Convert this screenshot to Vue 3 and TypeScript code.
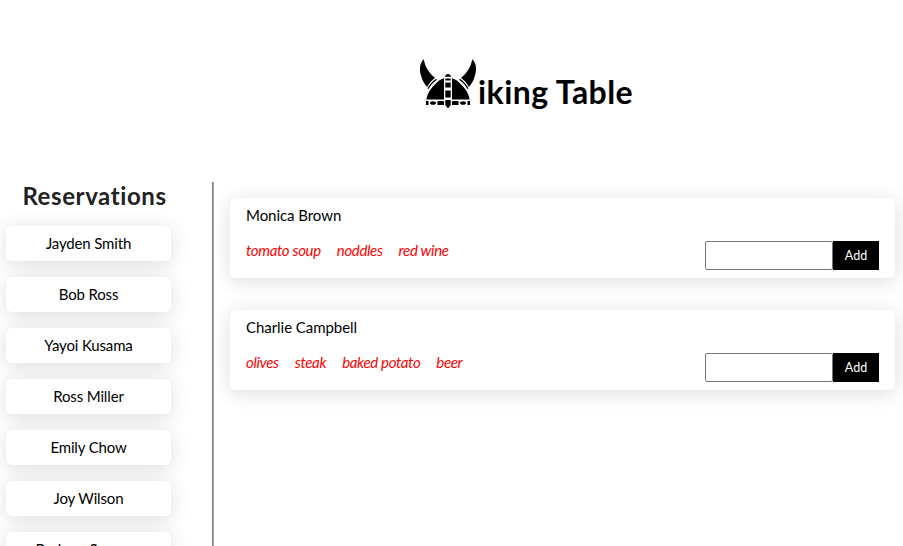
<script setup lang="ts">
interface Guest {
  name: string
  orders: string[]
}

const reservations: string[] = [
  'Jayden Smith',
  'Bob Ross',
  'Yayoi Kusama',
  'Ross Miller',
  'Emily Chow',
  'Joy Wilson',
  'Barbara Spencer',
]

const guests: Guest[] = [
  { name: 'Monica Brown', orders: ['tomato soup', 'noddles', 'red wine'] },
  { name: 'Charlie Campbell', orders: ['olives', 'steak', 'baked potato', 'beer'] },
]
</script>

<template>
  <div class="page">
    <header class="header">
      <svg class="logo" viewBox="0 0 58 50" aria-hidden="true">
        <path d="M4.800 .3C.5 4 0 11 2.300 17.500 3.500 21.500 5.500 25 8 28Q11 22.500 16 18.800C10 14 6 8 4.800 .3Z" />
        <path d="M53.200 .3c4.300 3.700 4.800 10.700 2.500 17.200-1.200 4-3.200 7.500-5.700 10.500Q47 22.500 42 18.800C48 14 52 8 53.200 .3Z" />
        <path class="band" d="M9 29.800Q12 23.800 17.500 20.200M49 29.800Q46 23.800 40.500 20.200" />
        <path d="M7.300 40.500C8.500 34 11.500 30 15 26.500 18 22.800 21.500 20 25 19.200V40.500ZM50.700 40.500C49.500 34 46.500 30 43 26.500 40 22.800 36.500 20 33 19.200V40.500Z" />
        <path d="M26 17.800Q26.500 15 29 15t3 2.800ZM26.300 19.500h5.400v2h-5.400ZM26.300 23.500h5.400v5h-5.400ZM26.300 31.500h5.400v7h-5.400ZM26.300 41h5.400v5L29 49.500 26.300 46Z" />
        <path d="M7 42h2.500v4H7ZM18.500 42h6.500v4h-6.500ZM33 42h6.500v4H33ZM48.500 42H51v4h-2.500Z" />
        <ellipse cx="14" cy="44" rx="3" ry="1.800" />
        <ellipse cx="44" cy="44" rx="3" ry="1.800" />
      </svg>
      <h1 class="title">iking Table</h1>
    </header>
    <main class="content">
      <aside class="sidebar">
        <h2 class="heading">Reservations</h2>
        <div v-for="name in reservations" :key="name" class="reservation">{{ name }}</div>
      </aside>
      <section class="tables">
        <article v-for="guest in guests" :key="guest.name" class="card">
          <p class="name">{{ guest.name }}</p>
          <div class="row">
            <div class="orders">
              <span v-for="order in guest.orders" :key="order">{{ order }}</span>
            </div>
            <form class="form" @submit.prevent>
              <input class="field" type="text" />
              <button class="add">Add</button>
            </form>
          </div>
        </article>
      </section>
    </main>
  </div>
</template>

<style>
body {
  overflow: hidden;
}
</style>

<style scoped>
.page {
  height: 546px;
  overflow: hidden;
  background: #fff;
  color: #000;
  font: 15px/19px 'Gill Sans MT', Lato, sans-serif;
  font-variant-ligatures: none;
}
.header {
  display: flex;
  height: 182px;
  padding: 59px 0 0 419px;
  box-sizing: border-box;
}
.logo {
  width: 58px;
  height: 50px;
  flex: none;
}
.band {
  fill: none;
  stroke: #000;
  stroke-width: 1.3;
}
.title {
  margin: 14px 0 0 1px;
  font-size: 32px;
  line-height: 37px;
  font-weight: 700;
  letter-spacing: 0.45px;
}
.content {
  display: flex;
  height: 364px;
}
.sidebar {
  width: 214px;
  padding: 0 42px 0 6px;
  box-sizing: border-box;
  border-right: 1px solid #a6a6a6;
  box-shadow: inset -1px 0 #808080;
}
.heading {
  margin: 0 0 16px;
  padding-left: 12px;
  color: #222;
  font-size: 24px;
  line-height: 28px;
  letter-spacing: 0.6px;
  text-align: center;
  white-space: nowrap;
}
.reservation {
  height: 35px;
  margin-bottom: 16px;
  border-radius: 6px;
  background: #fff;
  box-shadow: 0 3px 20px rgba(0, 0, 0, 0.14);
  line-height: 35px;
  letter-spacing: -0.15px;
  text-align: center;
}
.tables {
  flex: 1;
  padding: 16px 8px 0 16px;
}
.card {
  height: 80px;
  margin-bottom: 32px;
  padding: 8px 16px;
  box-sizing: border-box;
  border-radius: 6px;
  background: #fff;
  box-shadow: 0 3px 20px rgba(0, 0, 0, 0.14);
}
.name {
  margin: 0 0 16px;
  letter-spacing: -0.05px;
}
.row {
  display: flex;
  justify-content: space-between;
}
.orders {
  display: flex;
  gap: 16px;
  color: #f00;
  font-style: italic;
  letter-spacing: -0.34px;
}
.form {
  display: flex;
  height: 29px;
}
.field {
  width: 128px;
  height: 29px;
  padding: 1px 2px;
  box-sizing: border-box;
  border: 1px solid #767676;
  border-radius: 2px;
}
.add {
  width: 46px;
  padding: 0;
  border: 0;
  background: #000;
  color: #fff;
  font: 12.5px 'Gill Sans MT', Lato, sans-serif;
}
</style>
